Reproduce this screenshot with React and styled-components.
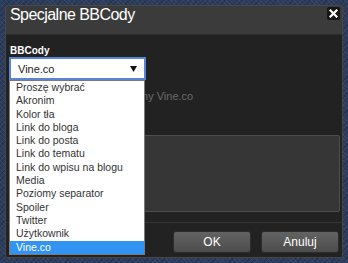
import React from "react";
import styled, { createGlobalStyle } from "styled-components";

const Global = createGlobalStyle`
  html, body { margin: 0; padding: 0; width: 348px; height: 263px; overflow: hidden; }
  body {
    background-color: #2b3c5d;
    background-image:
      repeating-linear-gradient(45deg, rgba(255,255,255,0.05) 0 1px, transparent 1px 3px),
      repeating-linear-gradient(-45deg, rgba(0,0,0,0.18) 0 1px, transparent 1px 4px);
    font-family: "Liberation Sans", Arial, sans-serif;
  }
`;

const Page = styled.div`
  padding: 5px;
`;

const Dialog = styled.div`
  width: 338px;
  height: 253px;
  box-sizing: border-box;
  background: #222;
  border: 1px solid #474747;
  border-radius: 2px;
  display: flex;
  flex-direction: column;
`;

const Header = styled.div`
  height: 29px;
  box-sizing: border-box;
  background: #3b3b3b;
  border-bottom: 1px solid #2c2c2c;
  display: flex;
  justify-content: space-between;
  align-items: flex-start;
  padding: 0 2px 0 4px;
`;

const Title = styled.h1`
  margin: 0;
  font-size: 16px;
  line-height: 18px;
  font-weight: normal;
  letter-spacing: -0.55px;
  color: #fff;
`;

const Close = styled.button`
  margin-top: 1px;
  width: 13px;
  height: 13px;
  padding: 0;
  border: none;
  border-radius: 2px;
  background: #161616;
  display: flex;
  align-items: center;
  justify-content: center;
`;

const Body = styled.div`
  flex: 1;
  display: flex;
  flex-direction: column;
  padding: 10px 2px 0 3px;
`;

const Label = styled.label`
  display: block;
  margin-left: 1px;
  font-size: 10px;
  line-height: 12px;
  font-weight: bold;
  color: #fff;
`;

const SelectWrap = styled.div`
  position: relative;
  width: 137px;
`;

const SelectBox = styled.div`
  height: 23px;
  box-sizing: border-box;
  background: #fff;
  border: 2px solid #5a85d2;
  display: flex;
  align-items: center;
  justify-content: space-between;
  padding: 0 7px 0 7px;
  font-size: 11px;
  color: #222;
`;

const List = styled.ul`
  position: absolute;
  top: 23px;
  left: 0;
  width: 136px;
  box-sizing: border-box;
  margin: 0;
  padding: 0;
  list-style: none;
  background: #fff;
  border: 1px solid #7a7a7a;
  z-index: 5;
`;

const Item = styled.li`
  height: 13.3px;
  line-height: 13.3px;
  padding-left: 6px;
  font-size: 10.5px;
  white-space: nowrap;
  color: ${(p) => (p.$active ? "#fff" : "#333")};
  background: ${(p) => (p.$active ? "#3393f2" : "transparent")};
`;

const Desc = styled.p`
  margin: 10px 0 0 1px;
  font-size: 11px;
  line-height: 13px;
  color: #6a6a6a;
`;

const Covered = styled.span`
  visibility: hidden;
`;

const TextArea = styled.div`
  margin-top: 32px;
  height: 77px;
  box-sizing: border-box;
  background: #363636;
  border: 1px solid #4e4e4e;
  border-radius: 2px;
`;

const Footer = styled.div`
  margin-top: 9px;
  border-top: 1px solid #353535;
  display: flex;
  justify-content: flex-end;
  gap: 10px;
  padding: 8px 3px 4px 0;
`;

const Button = styled.button`
  width: 78px;
  height: 22px;
  box-sizing: border-box;
  border: 1px solid #2c2c2c;
  border-radius: 3px;
  background: linear-gradient(#636363, #4c4c4c);
  color: #fff;
  font-family: "Liberation Sans", Arial, sans-serif;
  font-size: 12px;
  padding: 0;
`;

const options = [
  "Proszę wybrać",
  "Akronim",
  "Kolor tła",
  "Link do bloga",
  "Link do posta",
  "Link do tematu",
  "Link do wpisu na blogu",
  "Media",
  "Poziomy separator",
  "Spoiler",
  "Twitter",
  "Użytkownik",
  "Vine.co",
];

export default function App() {
  return (
    <Page>
      <Global />
      <Dialog>
        <Header>
          <Title>Specjalne BBCody</Title>
          <Close aria-label="Zamknij">
            <svg width="9" height="9" viewBox="0 0 9 9">
              <path d="M1.5 1.5 L7.5 7.5 M7.5 1.5 L1.5 7.5" stroke="#fff" strokeWidth="2.2" strokeLinecap="square" />
            </svg>
          </Close>
        </Header>
        <Body>
          <Label>BBCody</Label>
          <SelectWrap>
            <SelectBox>
              <span>Vine.co</span>
              <svg width="7" height="6" viewBox="0 0 7 6">
                <path d="M0 0 H7 L3.5 6 Z" fill="#111" />
              </svg>
            </SelectBox>
            <List>
              {options.map((o) => (
                <Item key={o} $active={o === "Vine.co"}>{o}</Item>
              ))}
            </List>
          </SelectWrap>
          <Desc><Covered>Wstawia film wideo osadzo</Covered>ny Vine.co</Desc>
          <TextArea />
        </Body>
        <Footer>
          <Button>OK</Button>
          <Button>Anuluj</Button>
        </Footer>
      </Dialog>
    </Page>
  );
}
